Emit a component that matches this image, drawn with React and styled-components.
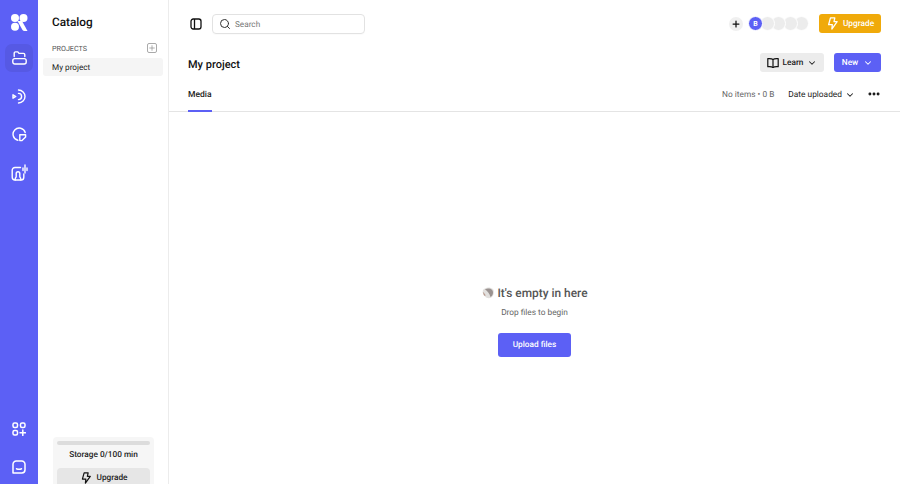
import React from "react";
import styled, { createGlobalStyle } from "styled-components";
import { FiChevronDown, FiSearch, FiPlus, FiMoreHorizontal } from "react-icons/fi";

const GlobalStyle = createGlobalStyle`
  html, body { margin: 0; padding: 0; height: 100%; overflow: hidden; background: #fff; }
  body { font-family: Roboto, "Liberation Sans", sans-serif; color: #111; text-rendering: geometricPrecision; }
  #root { height: 100%; }
  * { box-sizing: border-box; }
`;

const Logo = () => (
  <svg width="17" height="17" viewBox="0 0 17 17" fill="#fff">
    <circle cx="4" cy="4" r="4" />
    <circle cx="12.500" cy="4" r="4" />
    <circle cx="4" cy="12.800" r="4" />
    <path d="M6.500 7h4.500l5.500 10h-3a2.500 2.500 0 0 1-2-1z" />
  </svg>
);

const FolderIcon = () => (
  <svg width="15" height="14" viewBox="0 0 15 14" fill="none" stroke="#fff" strokeWidth="1.400" strokeLinecap="round" strokeLinejoin="round">
    <path d="M2.200 5.500V2.200c0-.8.500-1.300 1.300-1.300h2.300l1.200 1.500h4.500c.8 0 1.300.5 1.300 1.300v1.800" />
    <rect x="0.800" y="7.600" width="13.400" height="5.400" rx="2" />
  </svg>
);

const BroadcastIcon = () => (
  <svg width="15" height="15" viewBox="0 0 15 15" fill="none" stroke="#fff" strokeWidth="1.400" strokeLinecap="round" strokeLinejoin="round">
    <path d="M1 5.800l2.800 1.700L1 9.200z" />
    <path d="M6.500 4.400a3.100 3.100 0 0 1 0 6.200" />
    <path d="M6.500 1a6.500 6.500 0 0 1 0 13" />
  </svg>
);

const StickerIcon = () => (
  <svg width="15" height="15" viewBox="0 0 15 15" fill="none" stroke="#fff" strokeWidth="1.400" strokeLinecap="round" strokeLinejoin="round">
    <path d="M13.200 5.500A6.200 6.200 0 1 0 5.800 13.300" />
    <path d="M7.800 7.800h5.800v2.200l-3.600 3.600H7.800z" />
  </svg>
);

const VoiceIcon = () => (
  <svg width="17" height="17" viewBox="0 0 17 17" fill="none" stroke="#fff" strokeWidth="1.400" strokeLinecap="round" strokeLinejoin="round">
    <path d="M9.500 3.500H4A2.800 2.800 0 0 0 1.200 6.300v7A2.800 2.800 0 0 0 4 16h6a2.800 2.800 0 0 0 2.800-2.800V10" />
    <path d="M4.200 16v-1c0-1 .6-1.500 1-2.200V9.500a1.800 1.800 0 0 1 3.600 0v3.300c.4.700 1 1.200 1 2.200v1" />
    <path d="M12 4v2.500M14 1v8M16 4v2.500" />
  </svg>
);

const AppsIcon = () => (
  <svg width="14" height="14" viewBox="0 0 14 14" fill="none" stroke="#fff" strokeWidth="1.500" strokeLinecap="round">
    <rect x="1" y="1" width="4.500" height="4.500" rx="1.500" />
    <rect x="8.500" y="1" width="4.500" height="4.500" rx="1.500" />
    <rect x="1" y="8.500" width="4.500" height="4.500" rx="1.500" />
    <path d="M10.800 8v5.500M8 10.800h5.500" />
  </svg>
);

const ChatIcon = () => (
  <svg width="14" height="14" viewBox="0 0 14 14" fill="none" stroke="#fff" strokeWidth="1.500" strokeLinecap="round" strokeLinejoin="round">
    <path d="M4.200 1h5.600A3.200 3.200 0 0 1 13 4.200v5.600a3.200 3.200 0 0 1-3.200 3.200H1V4.200A3.200 3.200 0 0 1 4.200 1z" />
    <path d="M4.500 8.700c1.500.7 3.500.7 5 0" />
  </svg>
);

const BoltIcon = ({ size = 14, color = "#fff" }) => (
  <svg width={size} height={size} viewBox="0 0 14 14" fill="none" stroke={color} strokeWidth="1.400" strokeLinejoin="round" strokeLinecap="round">
    <path d="M4.800 1h4.700L8.600 5H12L6.300 13l.5-4.700H2.800z" />
  </svg>
);

const PanelIcon = () => (
  <svg width="12" height="12" viewBox="0 0 12 12" fill="none" stroke="#111" strokeWidth="1.300">
    <rect x="1" y="1" width="10" height="10" rx="2.200" />
    <path d="M4.500 1v10" />
  </svg>
);

const BookIcon = () => (
  <svg width="12" height="12" viewBox="0 0 12 12" fill="none" stroke="#111" strokeWidth="1.200" strokeLinejoin="round">
    <path d="M6 2.500C5 1.700 3 1.500.8 1.700v8c2.200-.2 4.200 0 5.200.8 1-.8 3-1 5.200-.8v-8C9 1.500 7 1.700 6 2.500z" />
    <path d="M6 2.500v8" />
  </svg>
);

const Shell = () => (
  <svg width="14" height="14" viewBox="0 0 14 14">
    <path d="M2 4c2-3 7-3.500 10-1 1.500 2 1 6-1 8-2 1.500-4 1.500-6 .5C3 10 1 7 2 4z" fill="#e2e0de" />
    <path d="M4 3.500c2.500 1.500 4.500 4 5.500 7.500 1.500-.5 2.700-2.500 2.500-5-.3-2-2-3.500-4-3.500-1.500 0-3 .3-4 1z" fill="#9a9290" />
    <path d="M1.800 6c1 .3 2 1.500 2.800 4L3 9.500z" fill="#b89a8e" />
  </svg>
);

const Layout = styled.div`
  display: flex;
  height: 484px;
  overflow: hidden;
`;

const Rail = styled.nav`
  width: 38px;
  flex: none;
  background: #5c60f5;
  display: flex;
  flex-direction: column;
  align-items: center;
  padding-top: 14px;
`;

const RailLogo = styled.div`
  height: 17px;
  margin-bottom: 13px;
  display: flex;
`;

const RailButton = styled.div`
  width: 28px;
  height: 28px;
  border-radius: 7px;
  display: flex;
  align-items: center;
  justify-content: center;
  margin-bottom: 10px;
  background: ${(p) => (p.$active ? "#5659e4" : "transparent")};
`;

const RailBottom = styled.div`
  margin-top: auto;
  margin-bottom: -7px;
  display: flex;
  flex-direction: column;
`;

const Sidebar = styled.aside`
  width: 131px;
  flex: none;
  border-right: 1px solid #ececec;
  display: flex;
  flex-direction: column;
  padding: 14px 5px 0 5px;
`;

const SideTitle = styled.div`
  font-size: 11.800px;
  font-weight: 500;
  line-height: 16px;
  padding-left: 9px;
  color: #111;
`;

const SectionRow = styled.div`
  display: flex;
  align-items: center;
  justify-content: space-between;
  margin-top: 10px;
  padding: 0 6px 0 9px;
  height: 16px;
  font-size: 7.200px;
  color: #555;
`;

const AddBox = styled.div`
  width: 10px;
  height: 10px;
  border: 1px solid #aaa;
  border-radius: 2px;
  color: #888;
  display: flex;
  align-items: center;
  justify-content: center;
`;

const ProjectItem = styled.div`
  margin-top: 2px;
  height: 18px;
  background: #f5f5f5;
  border-radius: 3px;
  padding-left: 9px;
  font-size: 8.200px;
  line-height: 20px;
  color: #222;
`;

const StorageCard = styled.div`
  margin: auto 9px -12px 10px;
  background: #f6f6f6;
  border-radius: 4px;
  padding: 4px 4px 8px;
  display: flex;
  flex-direction: column;
  align-items: stretch;
`;

const StorageBar = styled.div`
  height: 4px;
  background: #dcdcdc;
  border-radius: 2px;
`;

const StorageText = styled.div`
  text-align: center;
  font-size: 8.250px;
  font-weight: 500;
  line-height: 13px;
  margin: 4px 0 6px;
  color: #222;
`;

const StorageButton = styled.div`
  height: 20px;
  background: #e6e6e6;
  border-radius: 4px;
  display: flex;
  align-items: center;
  justify-content: center;
  gap: 5px;
  font-size: 8.250px;
  font-weight: 500;
  color: #222;
`;

const Main = styled.main`
  flex: 1;
  display: flex;
  flex-direction: column;
  min-width: 0;
`;

const TopBar = styled.div`
  height: 47px;
  padding: 14px 19px 0 21px;
  display: flex;
  align-items: flex-start;
`;

const PanelToggle = styled.div`
  width: 12px;
  height: 19px;
  display: flex;
  align-items: center;
  margin-right: 10px;
`;

const SearchBox = styled.div`
  width: 153px;
  height: 20px;
  border: 1px solid #e2e2e2;
  border-radius: 4px;
  display: flex;
  align-items: center;
  gap: 4px;
  padding-left: 6px;
  font-size: 8.200px;
  color: #777;
  box-shadow: 0 1px 1px rgba(0, 0, 0, 0.02);
`;

const SearchLabel = styled.span`
  padding-top: 2px;
`;

const TopRight = styled.div`
  margin-left: auto;
  display: flex;
  align-items: center;
  height: 19px;
`;

const PlusCircle = styled.div`
  width: 14px;
  height: 14px;
  border-radius: 50%;
  background: #f0f0f0;
  display: flex;
  align-items: center;
  justify-content: center;
  margin-right: 5px;
  color: #111;
`;

const Avatars = styled.div`
  display: flex;
  align-items: center;
  margin-right: 10px;
`;

const Avatar = styled.div`
  width: 15px;
  height: 15px;
  border-radius: 50%;
  border: 1px solid #fff;
  margin-left: ${(p) => (p.$first ? "0" : "-3.500px")};
  background: ${(p) => (p.$first ? "#5c60f5" : "#ececec")};
  color: #fff;
  font-size: 7px;
  font-weight: 700;
  display: flex;
  align-items: center;
  justify-content: center;
  position: relative;
  z-index: ${(p) => p.$z};
`;

const Button = styled.div`
  height: 19px;
  border-radius: 3px;
  display: flex;
  align-items: center;
  justify-content: center;
  gap: ${(p) => p.$gap || 4}px;
  font-size: 8.300px;
  font-weight: 500;
  width: ${(p) => p.$w}px;
  background: ${(p) => p.$bg};
  color: ${(p) => p.$fg};
`;

const TitleRow = styled.div`
  height: 30px;
  padding: 6px 19px 0 19px;
  display: flex;
  align-items: flex-start;
  justify-content: space-between;
`;

const PageTitle = styled.h1`
  margin: 0;
  font-size: 11px;
  font-weight: 500;
  line-height: 24px;
  color: #111;
`;

const TitleActions = styled.div`
  display: flex;
  gap: 10px;
`;

const TabBar = styled.div`
  height: 35px;
  border-bottom: 1px solid #e4e4e4;
  padding: 0 19px;
  display: flex;
  align-items: stretch;
  justify-content: space-between;
`;

const Tab = styled.div`
  font-size: 8.500px;
  font-weight: 500;
  line-height: 36px;
  height: 35px;
  color: #222;
  border-bottom: 2px solid #5c60f5;
`;

const TabMeta = styled.div`
  display: flex;
  align-items: center;
  height: 34px;
`;

const ItemCount = styled.span`
  font-size: 8.300px;
  color: #666;
  margin-right: 14px;
  padding-top: 2px;
`;

const SortBy = styled.span`
  display: flex;
  align-items: center;
  gap: 3px;
  font-size: 8.350px;
  color: #222;
  margin-right: 12px;
  padding-top: 2px;
`;

const EmptyArea = styled.div`
  flex: 1;
  display: flex;
  flex-direction: column;
  align-items: center;
  padding-top: 172px;
`;

const EmptyTitle = styled.div`
  display: flex;
  align-items: center;
  gap: 2px;
  font-size: 11.900px;
  font-weight: 500;
  line-height: 18px;
  color: #555;
`;

const EmptyHint = styled.div`
  font-size: 8.300px;
  line-height: 13px;
  color: #666;
  margin-top: 5px;
`;

const UploadButton = styled.div`
  margin-top: 13px;
  width: 73px;
  height: 24px;
  background: #5c60f5;
  color: #fff;
  border-radius: 3px;
  font-size: 8.250px;
  font-weight: 500;
  display: flex;
  align-items: center;
  justify-content: center;
`;

export default function App() {
  return (
    <Layout>
      <GlobalStyle />
      <Rail>
        <RailLogo>
          <Logo />
        </RailLogo>
        <RailButton $active>
          <FolderIcon />
        </RailButton>
        <RailButton>
          <BroadcastIcon />
        </RailButton>
        <RailButton>
          <StickerIcon />
        </RailButton>
        <RailButton>
          <VoiceIcon />
        </RailButton>
        <RailBottom>
          <RailButton>
            <AppsIcon />
          </RailButton>
          <RailButton>
            <ChatIcon />
          </RailButton>
        </RailBottom>
      </Rail>
      <Sidebar>
        <SideTitle>Catalog</SideTitle>
        <SectionRow>
          PROJECTS
          <AddBox>
            <FiPlus size={8} />
          </AddBox>
        </SectionRow>
        <ProjectItem>My project</ProjectItem>
        <StorageCard>
          <StorageBar />
          <StorageText>Storage 0/100 min</StorageText>
          <StorageButton>
            <BoltIcon size={12} color="#111" />
            Upgrade
          </StorageButton>
        </StorageCard>
      </Sidebar>
      <Main>
        <TopBar>
          <PanelToggle>
            <PanelIcon />
          </PanelToggle>
          <SearchBox>
            <FiSearch size={12} color="#333" />
            <SearchLabel>Search</SearchLabel>
          </SearchBox>
          <TopRight>
            <PlusCircle>
              <FiPlus size={10} strokeWidth={3} />
            </PlusCircle>
            <Avatars>
              <Avatar $first $z={5}>B</Avatar>
              <Avatar $z={4} />
              <Avatar $z={3} />
              <Avatar $z={2} />
              <Avatar $z={1} />
            </Avatars>
            <Button $w={62} $bg="#f0aa0a" $fg="#fff">
              <BoltIcon size={13} />
              Upgrade
            </Button>
          </TopRight>
        </TopBar>
        <TitleRow>
          <PageTitle>My project</PageTitle>
          <TitleActions>
            <Button $w={64} $bg="#ececec" $fg="#222">
              <BookIcon />
              Learn
              <FiChevronDown size={10} strokeWidth={2.5} />
            </Button>
            <Button $w={47} $gap={5} $bg="#5c60f5" $fg="#fff">
              New
              <FiChevronDown size={10} strokeWidth={2.5} />
            </Button>
          </TitleActions>
        </TitleRow>
        <TabBar>
          <Tab>Media</Tab>
          <TabMeta>
            <ItemCount>No items • 0 B</ItemCount>
            <SortBy>
              Date uploaded
              <FiChevronDown size={10} strokeWidth={2.5} />
            </SortBy>
            <FiMoreHorizontal size={14} strokeWidth={3} color="#111" />
          </TabMeta>
        </TabBar>
        <EmptyArea>
          <EmptyTitle>
            <Shell /> It's empty in here
          </EmptyTitle>
          <EmptyHint>Drop files to begin</EmptyHint>
          <UploadButton>Upload files</UploadButton>
        </EmptyArea>
      </Main>
    </Layout>
  );
}
